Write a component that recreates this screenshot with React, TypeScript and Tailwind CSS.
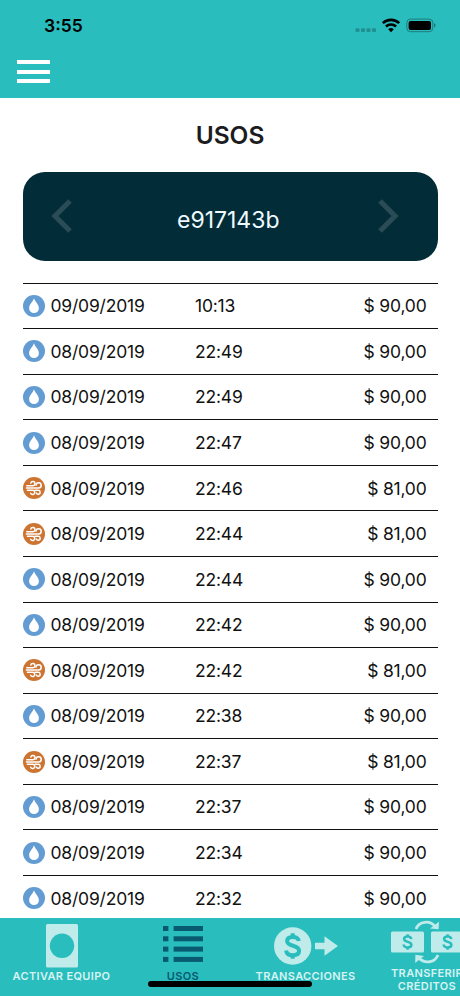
const usages = [
  { date: "09/09/2019", time: "10:13", amount: "90,00", type: "wash" },
  { date: "08/09/2019", time: "22:49", amount: "90,00", type: "wash" },
  { date: "08/09/2019", time: "22:49", amount: "90,00", type: "wash" },
  { date: "08/09/2019", time: "22:47", amount: "90,00", type: "wash" },
  { date: "08/09/2019", time: "22:46", amount: "81,00", type: "dry" },
  { date: "08/09/2019", time: "22:44", amount: "81,00", type: "dry" },
  { date: "08/09/2019", time: "22:44", amount: "90,00", type: "wash" },
  { date: "08/09/2019", time: "22:42", amount: "90,00", type: "wash" },
  { date: "08/09/2019", time: "22:42", amount: "81,00", type: "dry" },
  { date: "08/09/2019", time: "22:38", amount: "90,00", type: "wash" },
  { date: "08/09/2019", time: "22:37", amount: "81,00", type: "dry" },
  { date: "08/09/2019", time: "22:37", amount: "90,00", type: "wash" },
  { date: "08/09/2019", time: "22:34", amount: "90,00", type: "wash" },
  { date: "08/09/2019", time: "22:32", amount: "90,00", type: "wash" },
];

const WashIcon = () => (
  <svg width="22" height="22" viewBox="0 0 22 22">
    <circle cx="11" cy="11" r="11" fill="#639cd2" />
    <path
      d="M11 3.2C12 6.8 15.9 9.2 15.9 13.2a4.9 4.9 0 0 1-9.8 0C6.1 9.2 10 6.8 11 3.2Z"
      fill="#fff"
    />
  </svg>
);

const DryIcon = () => (
  <svg width="22" height="22" viewBox="0 0 22 22">
    <circle cx="11" cy="11" r="11" fill="#cc7533" />
    <g fill="none" stroke="#fff" strokeWidth="1.5" strokeLinecap="round">
      <path d="M3.8 8.7h6a2.1 2.1 0 1 0-2-2.6" />
      <path d="M3.4 11h12.1a2.6 2.6 0 1 0-2.5-2.8" />
      <path d="M4.4 13.3h5.2a2.1 2.1 0 1 1-1.9 2.9" />
      <path d="M12 13.3h3.1a2 2 0 1 1-1.8 2.7" />
    </g>
  </svg>
);

const StatusBar = () => (
  <div className="flex h-[51px] items-center justify-between pr-6 pl-11">
    <span className="text-[17.5px] leading-none font-semibold text-black">
      3:55
    </span>
    <svg width="81" height="16" viewBox="0 0 81 16">
      <g fill="#1f9090">
        <rect x="0.5" y="10.2" width="4" height="3.8" rx="1" />
        <rect x="6" y="10.2" width="4" height="3.8" rx="1" />
        <rect x="11.5" y="10.2" width="4" height="3.8" rx="1" />
        <rect x="17" y="10.2" width="4" height="3.8" rx="1" />
      </g>
      <g fill="none" stroke="#000" strokeWidth="2.6">
        <path d="M27.8 5.1a12 12 0 0 1 16.4 0" />
        <path d="M30.9 8.5a7.5 7.5 0 0 1 10.2 0" />
      </g>
      <path d="M33.2 11.3a4.2 4.2 0 0 1 5.6 0L36 14.2Z" fill="#000" />
      <rect
        x="51.8"
        y="1.1"
        width="26"
        height="12.6"
        rx="3.6"
        fill="none"
        stroke="#1b7c7c"
      />
      <rect x="53.6" y="2.9" width="22.4" height="9" rx="2" fill="#000" />
      <path d="M79 5.3c2.2.8 2.2 3.3 0 4.1Z" fill="#1b7c7c" />
    </svg>
  </div>
);

const MachineIcon = () => (
  <svg width="32" height="44" viewBox="0 0 32 44">
    <rect width="32" height="43.6" rx="1.5" fill="#bfebea" />
    <circle cx="16" cy="21.8" r="12.2" fill="#2abdbd" />
  </svg>
);

const ListIcon = () => (
  <svg width="40" height="36" viewBox="0 0 40 36" fill="#075a70">
    {[0, 10.3, 20.6, 30.9].map((y) => (
      <g key={y}>
        <rect y={y} width="5.4" height="5" />
        <rect x="10.6" y={y} width="29.4" height="5" />
      </g>
    ))}
  </svg>
);

const TransactionIcon = () => (
  <svg width="64" height="38" viewBox="0 0 64 38">
    <circle cx="18.7" cy="19" r="18.7" fill="#bfebea" />
    <path d="M41 15.8h9.500V9.300L64 19 50.500 28.700V22.200H41Z" fill="#bfebea" />
    <g fill="none" stroke="#2abdbd" strokeWidth="4">
      <path d="M24.8 14c-.5-2.9-3-4-6.1-4-3.5 0-5.6 1.6-5.6 4.1 0 6.3 12 3 12 9.7 0 2.9-2.5 4.4-6.4 4.4-3.7 0-6.2-1.7-6.6-4.8" />
      <path d="M18.7 6.2v4M18.7 27.5v4.3" />
    </g>
  </svg>
);

const TransferIcon = () => (
  <svg width="73" height="44" viewBox="0 0 73 44">
    <g fill="#bfebea">
      <rect y="11.5" width="33" height="21" rx="1.5" />
      <rect x="40" y="11.5" width="33" height="21" rx="1.5" />
      <path d="m48 1.8-.4 7.4-8.6-.8Z" />
      <path d="m24.200 43 .2-8.200 8.600 1.200Z" />
    </g>
    <g fill="none" stroke="#bfebea" strokeWidth="2.8">
      <path d="M25 9C28 1 39 0 44 6.5" />
      <path d="M47 35C44 42.5 34 44.5 28 38" />
    </g>
    {[16.6, 56.6].map((x) => (
      <path
        key={x}
        transform={`translate(${x} 22)`}
        d="M3.7-2.9C3.400-4.600 2-5.400 0-5.400c-2.100 0-3.500.9-3.500 2.500C-3.500.9 3.800-1.100 3.800 2.800 3.800 4.500 2.300 5.500 0 5.500-2.200 5.500-3.800 4.500-4 2.500M0-7.700v2.500M0 5.200v2.500"
        fill="none"
        stroke="#2abdbd"
        strokeWidth="2.5"
      />
    ))}
  </svg>
);

export default function App() {
  return (
    <div className="relative flex h-[996px] w-[460px] flex-col overflow-hidden bg-white font-['Inter',sans-serif]">
      <header className="h-[98px] shrink-0 bg-[#2abdbd]">
        <StatusBar />
        <button className="mt-[9px] ml-[17px] flex w-[33px] flex-col gap-[5.5px]">
          <span className="h-[4px] w-full bg-white" />
          <span className="h-[4px] w-full bg-white" />
          <span className="h-[4px] w-full bg-white" />
        </button>
      </header>

      <main className="flex min-h-0 flex-1 flex-col overflow-hidden px-[22.5px]">
        <h1 className="mt-[21px] text-center text-[24.5px] leading-8 font-semibold text-[#1c1c1e]">
          USOS
        </h1>

        <div className="mt-[20.6px] flex h-[89px] shrink-0 items-center justify-between rounded-[22px] bg-[#022c37] pr-[38.5px] pl-[28px]">
          <svg width="21" height="34" viewBox="0 0 21 34">
            <path
              d="M19 2 4 17 19 32"
              fill="none"
              stroke="#2a4c57"
              strokeWidth="5.2"
            />
          </svg>
          <span className="relative left-[3.5px] pt-[8px] text-[23px] leading-none text-[#eefaff]">
            e917143b
          </span>
          <svg width="21" height="34" viewBox="0 0 21 34">
            <path
              d="m2 2 15 15L2 32"
              fill="none"
              stroke="#2a4c57"
              strokeWidth="5.2"
            />
          </svg>
        </div>

        <ul className="mt-[22px]">
          {usages.map((usage, i) => (
            <li
              key={i}
              className="flex h-[45.57px] items-center border-t border-[#111] pr-[11px] text-[17.5px] tracking-[-0.2px] text-[#111]"
            >
              {usage.type === "wash" ? <WashIcon /> : <DryIcon />}
              <span className="ml-1.5 w-[144.5px] pt-px">{usage.date}</span>
              <span className="pt-px">{usage.time}</span>
              <span className="ml-auto pt-px">$ {usage.amount}</span>
            </li>
          ))}
        </ul>
      </main>

      <nav className="flex h-[78px] shrink-0 bg-[#2abdbd] text-center text-[11px] leading-[13px] font-semibold tracking-[0.35px] text-[#d6f3f2]">
        <div className="flex w-[122px] shrink-0 flex-col items-center pt-[6px] pl-px">
          <MachineIcon />
          <span className="mt-[2px] whitespace-nowrap">ACTIVAR EQUIPO</span>
        </div>
        <div className="flex w-[122px] shrink-0 flex-col items-center pt-[8px] text-[#075a70]">
          <ListIcon />
          <span className="mt-[8px]">USOS</span>
        </div>
        <div className="flex w-[122px] shrink-0 flex-col items-center pt-[9px] pl-px">
          <TransactionIcon />
          <span className="mt-[5px]">TRANSACCIONES</span>
        </div>
        <div className="flex w-[122px] shrink-0 flex-col items-center pt-[2px]">
          <TransferIcon />
          <span className="mt-[3px]">
            TRANSFERIR
            <br />
            CRÉDITOS
          </span>
        </div>
      </nav>

      <div className="absolute bottom-[9px] left-[148px] h-[6px] w-[164px] rounded-full bg-black" />
    </div>
  );
}
